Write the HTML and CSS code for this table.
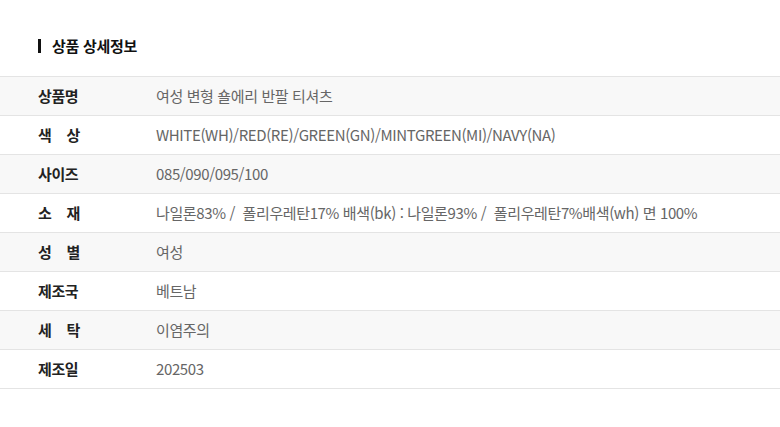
FILE: index.html
```html
<!DOCTYPE html>
<html lang="ko">
<head>
<meta charset="utf-8">
<link rel="stylesheet" href="styles.css">
</head>
<body>
<div class="wrap">
  <h2 class="title"><span class="bar"></span>상품 상세정보</h2>
  <div class="table">
    <div class="row alt"><div class="label">상품명</div><div class="value">여성 변형 숄에리 반팔 티셔츠</div></div>
    <div class="row"><div class="label">색&nbsp;&nbsp;&nbsp;&nbsp;상</div><div class="value">WHITE(WH)/RED(RE)/GREEN(GN)/MINTGREEN(MI)/NAVY(NA)</div></div>
    <div class="row alt"><div class="label">사이즈</div><div class="value">085/090/095/100</div></div>
    <div class="row"><div class="label">소&nbsp;&nbsp;&nbsp;&nbsp;재</div><div class="value">나일론83% /&nbsp; 폴리우레탄17% 배색(bk) : 나일론93% /&nbsp; 폴리우레탄7%배색(wh) 면 100%</div></div>
    <div class="row alt"><div class="label">성&nbsp;&nbsp;&nbsp;&nbsp;별</div><div class="value">여성</div></div>
    <div class="row"><div class="label">제조국</div><div class="value">베트남</div></div>
    <div class="row alt"><div class="label">세&nbsp;&nbsp;&nbsp;&nbsp;탁</div><div class="value">이염주의</div></div>
    <div class="row"><div class="label">제조일</div><div class="value">202503</div></div>
  </div>
</div>
</body>
</html>
```
FILE: styles.css
```css
html, body {
  margin: 0;
  padding: 0;
  background: #fff;
}
body {
  font-family: "Noto Sans CJK KR", "Noto Sans", sans-serif;
  color: #222;
}
.wrap {
  padding-top: 37px;
}
.title {
  margin: 0 0 21px 38px;
  display: flex;
  align-items: center;
  gap: 11px;
  font-size: 15px;
  font-weight: 700;
  line-height: 18px;
  letter-spacing: -0.3px;
  color: #111;
}
.bar {
  display: block;
  width: 3px;
  height: 14px;
  background: #111;
}
.table {
  border-top: 1px solid #e4e4e4;
}
.row {
  display: flex;
  align-items: center;
  height: 36px;
  padding-bottom: 2px;
  border-bottom: 1px solid #e4e4e4;
  font-size: 15px;
  letter-spacing: -0.4px;
}
.row.alt {
  background: #f8f8f8;
}
.label {
  width: 118px;
  padding-left: 38px;
  font-weight: 700;
  color: #222;
}
.value {
  color: #666;
  letter-spacing: -0.38px;
}
```
